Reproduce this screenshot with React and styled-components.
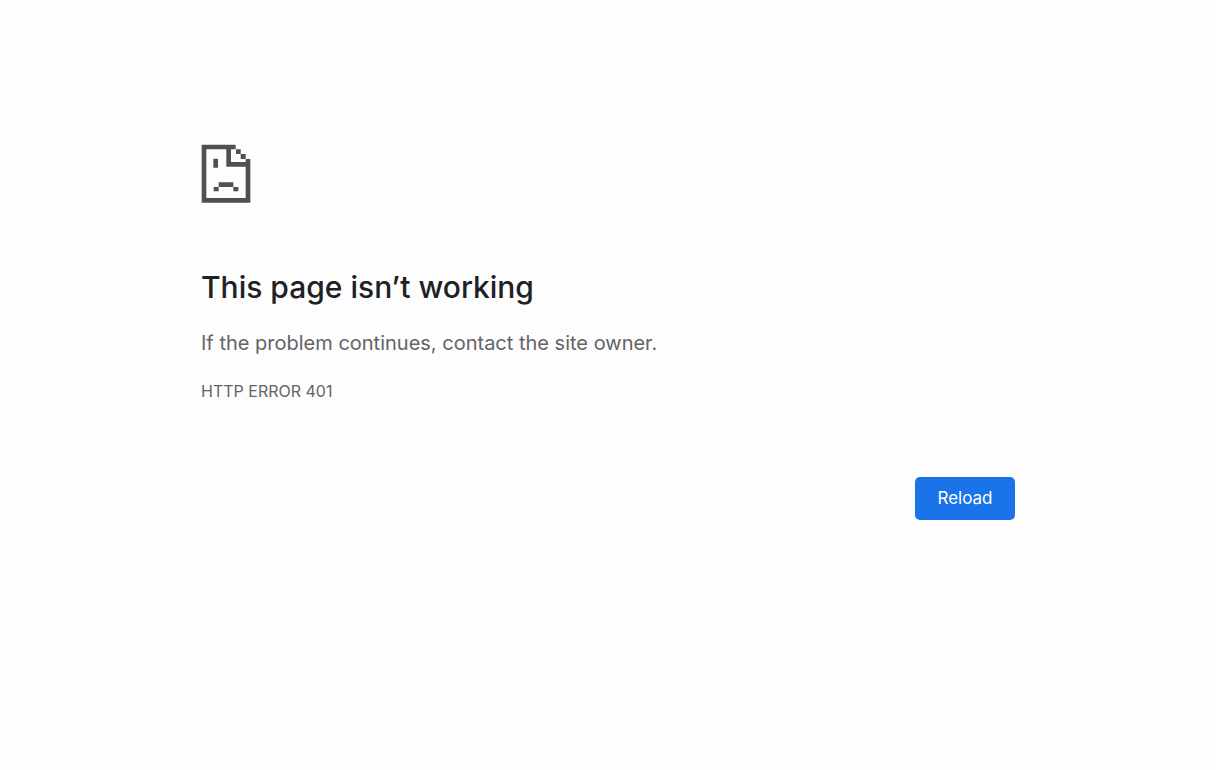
import styled, { createGlobalStyle } from "styled-components";

const GlobalStyle = createGlobalStyle`
  body {
    margin: 0;
    background-color: #fdfdfd;
    color: #646464;
    font-family: Inter, "Liberation Sans", sans-serif;
  }
`;

const Page = styled.main`
  box-sizing: border-box;
  max-width: 862px;
  margin: 0 auto;
  padding: 144px 24px 48px;
`;

const Icon = styled.svg`
  display: block;
  width: 50px;
  height: 60px;
  margin-bottom: 63px;
  fill: #505050;
`;

const Title = styled.h1`
  margin: 0 0 20px;
  color: #202124;
  font-size: 30px;
  font-weight: 500;
  line-height: 40px;
`;

const Summary = styled.p`
  margin: 0 0 20px;
  font-size: 20px;
  line-height: 32px;
`;

const ErrorCode = styled.p`
  margin: 0;
  font-size: 16px;
  line-height: 24px;
`;

const Actions = styled.div`
  display: flex;
  justify-content: flex-end;
  margin-top: 74px;
`;

const Button = styled.button`
  min-width: 100px;
  padding: 0 20px;
  border: 0;
  border-radius: 5px;
  background-color: #1a73e8;
  color: #fff;
  font-family: inherit;
  font-size: 17px;
  line-height: 43px;
  cursor: pointer;
`;

function SadPageIcon() {
  return (
    <Icon viewBox="0 0 150 180" aria-hidden="true">
      {/* outline with the folded corner */}
      <path d="M2 2H104V16H90V54H134V45H148V176H2ZM16 16V162H134V68H76V16Z" />
      <path d="M105 16H119V30H105ZM119 30H134V45H119Z" />
      {/* eye and mouth */}
      <path d="M37 44H51V71H37ZM53 115H97V129H53ZM38 129H53V142H38ZM97 129H112V142H97Z" />
    </Icon>
  );
}

export default function App() {
  return (
    <>
      <GlobalStyle />
      <Page>
        <SadPageIcon />
        <Title>This page isn’t working</Title>
        <Summary>If the problem continues, contact the site owner.</Summary>
        <ErrorCode>HTTP ERROR 401</ErrorCode>
        <Actions>
          <Button type="button" onClick={() => window.location.reload()}>
            Reload
          </Button>
        </Actions>
      </Page>
    </>
  );
}
